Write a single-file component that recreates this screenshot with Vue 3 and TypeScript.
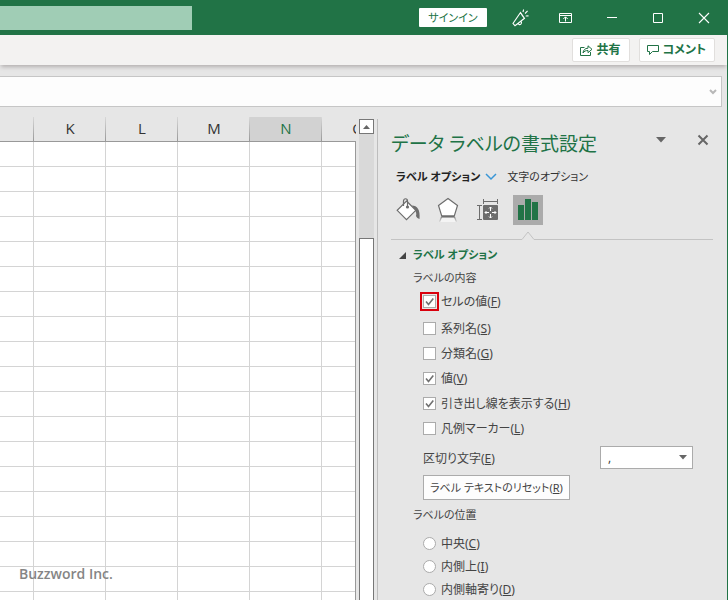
<script setup lang="ts">
import { ref } from 'vue'

interface Option {
  id: string
  text: string
  key: string
}
interface CheckOption extends Option {
  checked: boolean
  marked?: boolean
}

const columns: string[] = ['', 'K', 'L', 'M', 'N', 'O']
const selectedColumn = 'N'
const rowCount = 19

const contents = ref<CheckOption[]>([
  { id: 'cell', text: 'セルの値', key: 'F', checked: true, marked: true },
  { id: 'series', text: '系列名', key: 'S', checked: false },
  { id: 'category', text: '分類名', key: 'G', checked: false },
  { id: 'value', text: '値', key: 'V', checked: true },
  { id: 'leader', text: '引き出し線を表示する', key: 'H', checked: true },
  { id: 'legend', text: '凡例マーカー', key: 'L', checked: false },
])

const positions: Option[] = [
  { id: 'center', text: '中央', key: 'C' },
  { id: 'inside-end', text: '内側上', key: 'I' },
  { id: 'inside-base', text: '内側軸寄り', key: 'D' },
]
const position = ref('')
const separator = ref(',')
</script>

<template>
  <div class="window">
    <header class="titlebar">
      <div class="search"></div>
      <button class="signin" type="button">サインイン</button>
      <button class="sys first" type="button" aria-label="新機能">
        <svg width="18" height="18" viewBox="0 0 18 18" fill="none" stroke="#fff" stroke-width="1.1">
          <path d="M9.5 3.5 2 14.5l2 2.2 9.5-7.4zM7.2 14.2c.2 1.6 2.2 2 3 .6.5-.9.3-2-.4-2.7M12 3l.6-2.5M14 4.500l2.600-2.700M14.700 7l2.800-.1M9.500 3.500c1.200 2.400 2 4 4 5.800" />
        </svg>
      </button>
      <button class="sys" type="button" aria-label="リボンの表示オプション">
        <svg width="14" height="12" viewBox="0 0 14 12" fill="none" stroke="#fff">
          <path d="M.5 1.500h12v9H.5zM.5 3.500h12M6.500 9.500V5M4.300 7l2.200-2.200L8.700 7" />
        </svg>
      </button>
      <button class="sys" type="button" aria-label="最小化">
        <svg width="12" height="12" viewBox="0 0 12 12" stroke="#fff"><path d="M1 5.500h10" /></svg>
      </button>
      <button class="sys" type="button" aria-label="最大化">
        <svg width="12" height="12" viewBox="0 0 12 12" fill="none" stroke="#fff"><path d="M1.500 1.500h9v9h-9z" /></svg>
      </button>
      <button class="sys" type="button" aria-label="閉じる">
        <svg width="12" height="12" viewBox="0 0 12 12" stroke="#fff" stroke-width="1.1"><path d="m1 1 10 10M11 1 1 11" /></svg>
      </button>
    </header>

    <div class="ribbon">
      <button class="action" type="button">
        <svg width="13" height="13" viewBox="0 0 13 13" fill="none" stroke="#217346">
          <path d="M4.500 3.500h-4v8h10V8M3 9c.3-3 2-4.700 5-4.800V1.800L12 5.300 8 8.700V6.500C5.800 6.400 4.300 7.200 3 9z" />
        </svg>
        共有
      </button>
      <button class="action" type="button">
        <svg width="12" height="12" viewBox="0 0 12 12" fill="none" stroke="#217346">
          <path d="M.5 1.500h11v6h-6l-3 3v-3h-2z" />
        </svg>
        コメント
      </button>
    </div>

    <div class="formula">
      <input class="formula-input" type="text" aria-label="数式バー" />
      <svg width="8" height="6" viewBox="0 0 8 6" fill="none" stroke="#b8b8b8" stroke-width="2"><path d="m1 1 3 3 3-3" /></svg>
    </div>

    <main class="body">
      <div class="sheet">
        <table class="grid">
          <thead>
            <tr>
              <th v-for="(c, i) in columns" :key="c" scope="col" :class="{ edge: i === 0, selected: c === selectedColumn }">{{ c }}</th>
            </tr>
          </thead>
          <tbody>
            <tr v-for="r in rowCount" :key="r">
              <td v-for="c in columns" :key="c"></td>
            </tr>
          </tbody>
        </table>
        <div class="credit">Buzzword Inc.</div>
      </div>

      <div class="scrollbar">
        <button class="scroll-up" type="button" aria-label="上へスクロール">
          <svg width="7" height="4" viewBox="0 0 7 4" fill="#666"><path d="M0 4 3.500 0 7 4z" /></svg>
        </button>
        <div class="track"></div>
        <div class="thumb"></div>
      </div>

      <aside class="pane">
        <div class="pane-head">
          <h1>データ ラベルの書式設定</h1>
          <button class="plain menu" type="button" aria-label="作業ウィンドウ オプション">
            <svg width="10" height="6" viewBox="0 0 10 6" fill="#666"><path d="M0 0h10L5 5.500z" /></svg>
          </button>
          <button class="plain" type="button" aria-label="閉じる">
            <svg width="12" height="12" viewBox="0 0 12 12" stroke="#666" stroke-width="2"><path d="m1.500 1.500 9 9M10.500 1.500l-9 9" /></svg>
          </button>
        </div>

        <nav class="tabs">
          <button class="tab active" type="button">
            ラベル オプション
            <svg width="12" height="8" viewBox="0 0 12 8" fill="none" stroke="#3a96d6" stroke-width="1.500"><path d="m1 1 5 5 5-5" /></svg>
          </button>
          <button class="tab" type="button">文字のオプション</button>
        </nav>

        <div class="icons">
          <button class="icon" type="button" aria-label="塗りつぶしと線">
            <svg width="26" height="26" viewBox="0 0 26 26">
              <path d="M17 8.500c5 0 8.500 4 7.500 13.500-1.500-.5-3-1.500-3.500-3 .8-2.500 0-4.500-1.500-6z" fill="#6d6d6d" />
              <path d="m11.500 4 9.300 9.300-9.300 9.300-9.300-9.300z" fill="#fff" stroke="#6d6d6d" stroke-width="1.200" />
              <path d="M8.500 9V4c0-3 4-3 4 0v6" fill="none" stroke="#6d6d6d" stroke-width="1.200" />
              <circle cx="12.500" cy="10" r="1.600" fill="#6d6d6d" />
            </svg>
          </button>
          <button class="icon" type="button" aria-label="効果">
            <svg width="26" height="26" viewBox="0 0 26 26">
              <defs>
                <linearGradient id="reflection" x1="0" y1="0" x2="0" y2="1">
                  <stop offset="0" stop-color="#8a8a8a" /><stop offset="1" stop-color="#ddd" />
                </linearGradient>
              </defs>
              <path d="m6.500 21-1.500 4h16l-1.500-4z" fill="#f4f4f4" />
              <path d="m6.500 20-2 5M19.500 20l2 5" stroke="url(#reflection)" stroke-width="1.200" />
              <path d="m13 1.500 9.500 7L19.300 19H6.700L3.500 8.500z" fill="#fff" stroke="#6d6d6d" stroke-width="1.200" />
              <path d="M6.500 19.500h13" stroke="#6d6d6d" stroke-width="2" />
            </svg>
          </button>
          <button class="icon" type="button" aria-label="サイズとプロパティ">
            <svg width="26" height="26" viewBox="0 0 26 26" fill="none" stroke="#6d6d6d">
              <path d="M8 4.500h15M8.500 2v5M22.500 2v5M4.500 8v15M2 8.500h5M2 22.500h5" />
              <rect x="8" y="8" width="15" height="15" rx="1" fill="#6d6d6d" stroke="none" />
              <path d="M15.500 10v4M15.500 17v4M10 15.500h4M17 15.500h4M14 11.500l1.500-1.500 1.500 1.500M14 19.500l1.500 1.500 1.500-1.500M11.500 14 10 15.500l1.500 1.500M19.500 14l1.500 1.500-1.500 1.500" stroke="#fff" />
            </svg>
          </button>
          <button class="icon current" type="button" aria-label="ラベル オプション">
            <svg width="20" height="22" viewBox="0 0 20 22" fill="#217346">
              <path d="M0 6h6v15H0zM7 0h6v21H7zM14 3h6v18h-6z" />
            </svg>
          </button>
        </div>

        <div class="rule">
          <svg width="14" height="9" viewBox="0 0 14 9"><path d="M0 8.500h1L7 1l6 7.500h1" fill="#e6e6e6" stroke="#c3c3c3" /></svg>
        </div>

        <section class="options">
          <h2>
            <svg width="7" height="7" viewBox="0 0 7 7" fill="#444"><path d="M7 0v7H0z" /></svg>
            ラベル オプション
          </h2>
          <h3>ラベルの内容</h3>
          <div class="checks">
            <div v-for="o in contents" :key="o.id" class="choice" :class="{ marked: o.marked }">
              <span class="box">
                <input :id="o.id" v-model="o.checked" type="checkbox" />
                <svg v-if="o.checked" width="13" height="13" viewBox="0 0 13 13" fill="none" stroke="#707070" stroke-width="1.600"><path d="m3 6.500 2.500 3L10.300 3.500" /></svg>
              </span>
              <label :for="o.id">{{ o.text }}(<u>{{ o.key }}</u>)</label>
            </div>
          </div>
          <div class="separator">
            <label for="separator">区切り文字(<u>E</u>)</label>
            <span class="combo">
              <select id="separator" v-model="separator">
                <option value=",">,</option>
              </select>
              <svg width="8" height="5" viewBox="0 0 8 5" fill="#666"><path d="M0 0h8L4 4.500z" /></svg>
            </span>
          </div>
          <button class="reset" type="button">ラベル テキストのリセット(<u>R</u>)</button>
          <h3>ラベルの位置</h3>
          <div class="radios">
            <div v-for="p in positions" :key="p.id" class="choice">
              <input :id="p.id" v-model="position" type="radio" name="position" :value="p.id" />
              <label :for="p.id">{{ p.text }}(<u>{{ p.key }}</u>)</label>
            </div>
          </div>
        </section>
      </aside>
    </main>
  </div>
</template>

<style>
body {
  margin: 0;
  overflow: hidden;
}
</style>

<style scoped>
.window {
  box-sizing: border-box;
  display: flex;
  flex-direction: column;
  height: 100vh;
  overflow: hidden;
  background: #e6e6e6;
  border-right: 1px solid #217346;
  color: #444;
  font-family: "Noto Sans", "Noto Sans CJK JP", sans-serif;
  font-size: 12px;
  font-feature-settings: "palt";
}
button,
input,
select {
  font: inherit;
  font-feature-settings: inherit;
  color: inherit;
  margin: 0;
  padding: 0;
  box-sizing: border-box;
}
svg {
  display: block;
  flex: none;
}
h1,
h2,
h3 {
  margin: 0;
  font-size: 11px;
  font-weight: 400;
  line-height: 20px;
}
.titlebar {
  flex: none;
  display: flex;
  align-items: center;
  height: 35px;
  background: #217346;
}
.search {
  width: 192px;
  height: 24px;
  background: #a0cdb5;
}
.signin {
  margin-left: auto;
  width: 68px;
  height: 19px;
  line-height: 18px;
  border: 0;
  border-radius: 1px;
  background: #fff;
  color: #217346;
  font-size: 11px;
}
.sys {
  display: grid;
  place-items: center;
  width: 46px;
  height: 35px;
  border: 0;
  background: none;
}
.sys.first {
  margin-left: 10px;
}
.ribbon {
  flex: none;
  display: flex;
  align-items: center;
  justify-content: flex-end;
  gap: 9px;
  height: 30px;
  padding-right: 12px;
  background: #f3f2f1;
  box-shadow: 0 3px 4px -1px #b4b0b0;
}
.action {
  display: flex;
  align-items: center;
  gap: 4px;
  height: 24px;
  padding: 0 8px 0 7px;
  border: 1px solid #e1dfdd;
  border-radius: 2px;
  background: #fff;
  color: #217346;
  font-size: 12px;
  font-weight: 700;
  line-height: 20px;
}
.formula {
  flex: none;
  display: flex;
  align-items: center;
  box-sizing: border-box;
  height: 31px;
  margin: 11px 5px 0 0;
  padding-right: 4px;
  border: 1px solid #c6c6c6;
  border-left: 0;
  background: #fdfdfd;
}
.formula-input {
  flex: 1;
  min-width: 0;
  height: 100%;
  border: 0;
  outline: 0;
  background: transparent;
}
.body {
  flex: 1;
  min-height: 0;
  display: flex;
  padding-top: 10px;
}
.sheet {
  position: relative;
  flex: 1;
  min-width: 0;
  overflow: hidden;
}
.sheet::after {
  content: "";
  position: absolute;
  top: 24px;
  right: 0;
  bottom: 0;
  width: 1px;
  background: #999;
}
.grid {
  table-layout: fixed;
  width: 394px;
  border-spacing: 0;
}
th,
td {
  box-sizing: border-box;
  height: 25px;
  padding: 0;
}
th {
  width: 72px;
  border-bottom: 1px solid #999;
  background: linear-gradient(#d8d8d8, #999) right / 1px 100% no-repeat;
  color: #333;
  font-family: "Open Sans", sans-serif;
  font-size: 15px;
  font-weight: 400;
  line-height: 22px;
  vertical-align: top;
}
th.edge {
  width: 34px;
}
th.selected {
  background-color: #d2d2d2;
  color: #217346;
}
td {
  border-right: 1px solid #d4d4d4;
  border-bottom: 1px solid #d4d4d4;
  background: #fff;
}
.credit {
  position: absolute;
  left: 19px;
  bottom: 16px;
  color: #858585;
  font-family: "Open Sans", sans-serif;
  font-size: 14px;
  font-weight: 600;
  line-height: 20px;
}
.scrollbar {
  flex: none;
  display: flex;
  flex-direction: column;
  width: 15px;
  margin: 2px 3px 0;
}
.scroll-up {
  display: grid;
  place-items: center;
  height: 15px;
  border: 1px solid #777;
  background: #fff;
}
.track {
  height: 104px;
  background: #d9d9d9;
}
.thumb {
  flex: 1;
  border: 1px solid #777;
  border-bottom: 0;
  background: #fff;
}
.pane {
  flex: none;
  box-sizing: border-box;
  width: 350px;
  margin-top: 2px;
  padding: 8px 14px 0 13px;
  border-left: 1px solid #bdbdbd;
}
.pane-head {
  display: flex;
  align-items: center;
  height: 34px;
}
.pane-head h1 {
  flex: 1;
  color: #217346;
  font-size: 19px;
  line-height: 34px;
}
.plain {
  display: grid;
  place-items: center;
  width: 20px;
  height: 20px;
  margin-bottom: 8px;
  border: 0;
  background: none;
}
.menu {
  margin-right: 22px;
}
.tabs {
  display: flex;
  gap: 10px;
  height: 28px;
  margin-top: 1px;
  padding-left: 5px;
}
.tab {
  display: flex;
  align-items: center;
  gap: 5px;
  height: 29px;
  border: 0;
  background: none;
  color: #333;
  font-size: 11px;
  line-height: 20px;
}
.tab.active {
  color: #222;
  font-weight: 700;
}
.icons {
  display: flex;
  gap: 10px;
  padding-top: 5px;
}
.icon {
  display: grid;
  place-items: center;
  width: 30px;
  height: 30px;
  border: 0;
  background: none;
}
.icons .icon:first-child {
  margin-left: 2px;
}
.icon.current {
  background: #ababab;
}
.rule {
  display: flex;
  height: 9px;
  margin-top: 6px;
}
.rule::before,
.rule::after {
  content: "";
  border-bottom: 1px solid #c3c3c3;
}
.rule::before {
  width: 130px;
}
.rule::after {
  flex: 1;
}
.options {
  padding: 5px 0 0 22px;
}
.options h2 {
  display: flex;
  align-items: center;
  gap: 7px;
  margin-left: -14px;
  color: #217346;
  font-weight: 700;
}
.options h3 {
  margin-top: 3px;
}
.checks {
  padding: 1px 0 0 10px;
}
.choice {
  display: flex;
  align-items: center;
  gap: 5px;
  height: 25px;
  line-height: 20px;
}
.choice.marked {
  margin-bottom: 2px;
}
.box {
  display: grid;
}
.box > * {
  grid-area: 1 / 1;
  pointer-events: none;
}
.choice input {
  appearance: none;
  width: 13px;
  height: 13px;
  border: 1px solid #ababab;
  background: #fff;
  pointer-events: auto;
}
.marked input {
  outline: 2px solid #d9000d;
  outline-offset: 1px;
}
.choice input[type="radio"] {
  border-radius: 50%;
}
.choice input[type="radio"]:checked {
  background: radial-gradient(#555 3px, #fff 4px);
}
.separator {
  display: flex;
  align-items: center;
  justify-content: space-between;
  height: 25px;
  margin-top: 4px;
  padding: 0 20px 0 10px;
}
.combo {
  display: grid;
  align-items: center;
}
.combo > * {
  grid-area: 1 / 1;
}
.combo select {
  appearance: none;
  width: 93px;
  height: 23px;
  padding: 0 20px 0 7px;
  border: 1px solid #ababab;
  border-radius: 0;
  background: #fff;
}
.combo svg {
  justify-self: end;
  margin-right: 6px;
  pointer-events: none;
}
.reset {
  display: block;
  height: 25px;
  margin: 5px 0 5px 10px;
  padding: 0 6px;
  border: 1px solid #ababab;
  background: #fdfdfd;
  font-size: 11px;
  line-height: 20px;
}
.radios {
  padding: 7px 0 0 10px;
}
.radios .choice {
  height: 23px;
}
</style>
